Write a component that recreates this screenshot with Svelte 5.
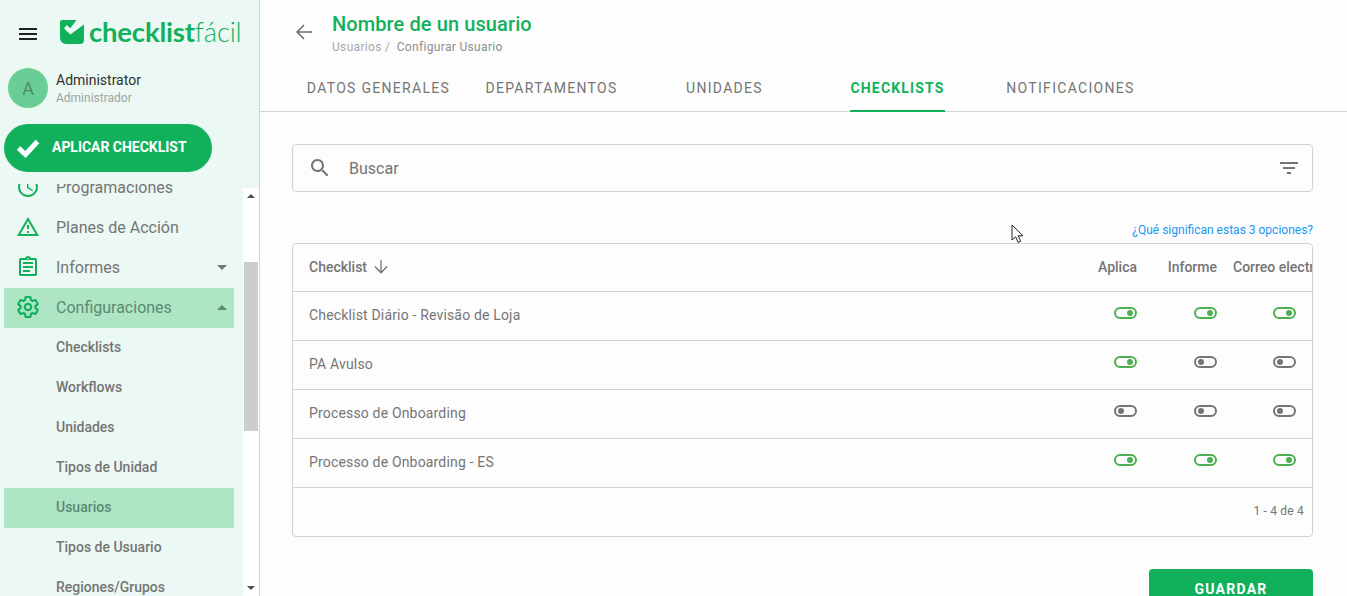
<script>
  const tabs = [
    { label: 'Datos generales' },
    { label: 'Departamentos' },
    { label: 'Unidades' },
    { label: 'Checklists', active: true },
    { label: 'Notificaciones' }
  ];
  const subItems = ['Checklists', 'Workflows', 'Unidades', 'Tipos de Unidad', 'Usuarios', 'Tipos de Usuario', 'Regiones/Grupos'];
  const rows = [
    { name: 'Checklist Diário - Revisão de Loja', values: [true, true, true] },
    { name: 'PA Avulso', values: [true, false, false] },
    { name: 'Processo de Onboarding', values: [false, false, false] },
    { name: 'Processo de Onboarding - ES', values: [true, true, true] }
  ];
</script>

<div class="page">
  <aside class="sidebar">
    <div class="brand">
      <svg class="menu" viewBox="0 0 24 24"><path d="M3 18h18v-2H3v2zm0-5h18v-2H3v2zm0-7v2h18V6H3z" /></svg>
      <svg class="logo-mark" viewBox="0 0 24 24">
        <path d="M2 0h14.5l-6.2 8.2-3.6-3.1-2.7 3.3 6.4 6.2L24 4.5V20a4 4 0 0 1-4 4H6a6 6 0 0 1-6-6V2a2 2 0 0 1 2-2z" fill="#11b15b" />
      </svg>
      <div class="logo-text"><b>checklist</b><span>fácil</span></div>
    </div>

    <div class="user">
      <div class="avatar">A</div>
      <div>
        <div class="user-name">Administrator</div>
        <div class="user-role">Administrador</div>
      </div>
    </div>

    <button class="apply">
      <svg viewBox="0 0 24 20"><path d="M2.5 10l7 6.5L21.5 3.5" fill="none" stroke="#fff" stroke-width="5" /></svg>
      <span>Aplicar checklist</span>
    </button>

    <div class="nav-wrap">
      <nav>
        <div class="nav-list">
          <div class="item">
            <svg class="ico" viewBox="0 0 24 24"><path d="M11.99 2C6.47 2 2 6.48 2 12s4.47 10 9.99 10C17.52 22 22 17.52 22 12S17.52 2 11.99 2zM12 20c-4.42 0-8-3.58-8-8s3.58-8 8-8 8 3.58 8 8-3.58 8-8 8zm.5-13H11v6l5.25 3.15.75-1.23-4.5-2.67z" /></svg>
            Programaciones
          </div>
          <div class="item">
            <svg class="ico" viewBox="0 0 24 24"><path d="M12 5.99L19.53 19H4.47L12 5.99M12 2L1 21h22L12 2zm1 14h-2v2h2v-2zm0-6h-2v4h2v-4z" /></svg>
            Planes de Acción
          </div>
          <div class="item">
            <svg class="ico" viewBox="0 0 24 24"><path d="M19 3h-4.18C14.4 1.84 13.3 1 12 1s-2.4.84-2.82 2H5c-1.1 0-2 .9-2 2v14c0 1.1.9 2 2 2h14c1.1 0 2-.9 2-2V5c0-1.1-.9-2-2-2zm-7-.25c.41 0 .75.34.75.75s-.34.75-.75.75-.75-.34-.75-.75.34-.75.75-.75zM19 19H5V5h14v14zM7 15h7v2H7zm0-4h10v2H7zm0-4h10v2H7z" /></svg>
            Informes
            <span class="caret down"></span>
          </div>
          <div class="item selected">
            <svg class="ico" viewBox="0 0 24 24">
              <path d="M19.43 12.98c.04-.32.07-.64.07-.98s-.03-.66-.07-.98l2.11-1.65c.19-.15.24-.42.12-.64l-2-3.46c-.12-.22-.39-.3-.61-.22l-2.49 1c-.52-.4-1.08-.73-1.69-.98l-.38-2.65C14.46 2.18 14.25 2 14 2h-4c-.25 0-.46.18-.49.42l-.38 2.65c-.61.25-1.17.59-1.69.98l-2.49-1c-.23-.09-.49 0-.61.22l-2 3.46c-.13.22-.07.49.12.64l2.11 1.65c-.04.32-.07.65-.07.98s.03.66.07.98l-2.11 1.65c-.19.15-.24.42-.12.64l2 3.46c.12.22.39.3.61.22l2.49-1c.52.4 1.08.73 1.69.98l.38 2.65c.03.24.24.42.49.42h4c.25 0 .46-.18.49-.42l.38-2.65c.61-.25 1.17-.59 1.69-.98l2.49 1c.23.09.49 0 .61-.22l2-3.46c.12-.22.07-.49-.12-.64l-2.11-1.65z" fill="none" stroke="#11b15b" stroke-width="2.2" />
              <circle cx="12" cy="12" r="3.2" fill="none" stroke="#11b15b" stroke-width="2.2" />
            </svg>
            Configuraciones
            <span class="caret up"></span>
          </div>
          {#each subItems as sub}
            <div class="item sub" class:selected={sub === 'Usuarios'}>{sub}</div>
          {/each}
        </div>
      </nav>
      <div class="scrollbar">
        <span class="arrow up"></span>
        <div class="track"><div class="thumb"></div></div>
        <span class="arrow down"></span>
      </div>
    </div>
  </aside>

  <main>
    <header>
      <svg class="back" viewBox="0 0 24 24"><path d="M20 11.2H6.9l5.6-5.6-1-1L4 12l7.5 7.4 1-1-5.6-5.6H20z" /></svg>
      <div>
        <h1>Nombre de un usuario</h1>
        <div class="crumbs"><span>Usuarios /</span> <em>Configurar Usuario</em></div>
      </div>
    </header>

    <div class="tabs">
      {#each tabs as tab}
        <div class="tab"><span class:active={tab.active}>{tab.label}</span></div>
      {/each}
    </div>

    <div class="content">
      <div class="search">
        <svg class="search-ico" viewBox="0 0 24 24"><path d="M15.5 14h-.79l-.28-.27C15.41 12.59 16 11.11 16 9.5 16 5.91 13.09 3 9.5 3S3 5.91 3 9.5 5.91 16 9.5 16c1.61 0 3.09-.59 4.23-1.57l.27.28v.79l5 4.99L20.49 19l-4.99-5zm-6 0C7.01 14 5 11.99 5 9.5S7.01 5 9.5 5 14 7.01 14 9.5 11.99 14 9.5 14z" /></svg>
        <span class="placeholder">Buscar</span>
        <svg class="filter-ico" viewBox="0 0 24 24"><path d="M10 18h4v-2h-4v2zM3 6v2h18V6H3zm3 7h12v-2H6v2z" /></svg>
      </div>

      <a class="help" href="#help">¿Qué significan estas 3 opciones?</a>

      <div class="table">
        <div class="row head">
          <div class="name">
            Checklist
            <svg viewBox="0 0 24 24"><path d="M20 12l-1.2-1.2-6 6V4h-1.6v12.8l-6-6L4 12l8 8z" /></svg>
          </div>
          <div class="col">Aplica</div>
          <div class="col">Informe</div>
          <div class="col last">Correo electrónico</div>
        </div>
        {#each rows as row}
          <div class="row">
            <div class="name">{row.name}</div>
            {#each row.values as on}
              <div class="col"><span class="toggle" class:on></span></div>
            {/each}
          </div>
        {/each}
        <div class="foot">1 - 4 de 4</div>
      </div>

      <div class="actions"><button class="save">Guardar</button></div>
    </div>

    <svg class="cursor" viewBox="0 0 13 20"><path d="M1 1v15l3.6-3.2 2.5 5.7 2.6-1.1-2.5-5.6H12z" fill="#fff" stroke="#222" stroke-width="1" /></svg>
  </main>
</div>

<style>
  :global(body) {
    margin: 0;
    overflow: hidden;
  }

  .page {
    display: flex;
    height: 596px;
    overflow: hidden;
    font-family: Roboto, "Liberation Sans", sans-serif;
    color: #757575;
  }

  .sidebar {
    display: flex;
    flex-direction: column;
    flex: none;
    box-sizing: border-box;
    width: 260px;
    background: #ecf8f3;
    border-right: 1px solid #d4d4d4;
  }

  .brand {
    display: flex;
    align-items: center;
    height: 68px;
    padding-left: 16px;
    box-sizing: border-box;
    padding-bottom: 1px;
  }

  .menu {
    width: 24px;
    height: 24px;
    fill: #212121;
    margin-right: 20px;
    margin-top: 1px;
  }

  .logo-mark {
    width: 24px;
    height: 24px;
    margin-right: 5px;
    margin-bottom: 4px;
  }

  .logo-text {
    font-family: Lato, "Open Sans", sans-serif;
    font-size: 27.5px;
    line-height: 28px;
    color: #11b15b;
    letter-spacing: -0.2px;
    margin-bottom: 4px;
    white-space: nowrap;
  }

  .logo-text b {
    font-weight: 700;
  }

  .logo-text span {
    font-weight: 300;
  }

  .user {
    display: flex;
    align-items: center;
    gap: 8px;
    padding-left: 8px;
    height: 40px;
  }

  .avatar {
    display: flex;
    align-items: center;
    justify-content: center;
    width: 40px;
    height: 40px;
    border-radius: 50%;
    background: #69cd95;
    color: #4d8c69;
    font-size: 18px;
  }

  .user-name {
    font-size: 14px;
    line-height: 18px;
    color: #303030;
    margin-top: 1px;
  }

  .user-role {
    font-size: 12px;
    line-height: 18px;
    color: #a3a3a3;
  }

  .apply {
    display: flex;
    align-items: center;
    gap: 12px;
    flex: none;
    width: 208px;
    height: 48px;
    margin: 16px 0 0 4px;
    padding: 0 0 0 12px;
    border: 0;
    border-radius: 24px;
    background: #11b15b;
    color: #fff;
    font-family: inherit;
    font-size: 14px;
    font-weight: 700;
    text-transform: uppercase;
    letter-spacing: -0.03px;
  }

  .apply span {
    margin-bottom: 2px;
  }

  .apply svg {
    width: 24px;
    height: 20px;
  }

  .nav-wrap {
    display: flex;
    flex: 1;
    min-height: 0;
  }

  nav {
    flex: 1;
    margin-top: 12px;
    overflow: hidden;
  }

  .nav-list {
    margin-top: -16px;
  }

  .item {
    display: flex;
    align-items: center;
    width: 230px;
    height: 40px;
    margin-left: 4px;
    border-radius: 2px;
    font-size: 16px;
    box-sizing: border-box;
    padding: 0 7px 2px 0;
    color: #757575;
  }

  .ico {
    width: 24px;
    height: 24px;
    margin: 0 16px 0 12px;
    fill: #11b15b;
  }

  .item.sub {
    padding-left: 52px;
    font-size: 14px;
    font-weight: 500;
  }

  .item.selected {
    background: #aee5c5;
    color: #5b8a70;
  }

  .caret {
    margin-left: auto;
    border-left: 5px solid transparent;
    border-right: 5px solid transparent;
  }

  .caret.down {
    border-top: 5px solid #757575;
  }

  .caret.up {
    border-bottom: 5px solid #5b8a70;
  }

  .scrollbar {
    display: flex;
    flex-direction: column;
    flex: none;
    width: 16px;
    margin-top: 16px;
    background: #fff;
  }

  .arrow {
    flex: none;
    align-self: center;
    margin: 6px 0;
    border-left: 4px solid transparent;
    border-right: 4px solid transparent;
  }

  .arrow.up {
    border-bottom: 4px solid #505050;
  }

  .arrow.down {
    border-top: 4px solid #505050;
  }

  .track {
    flex: 1;
  }

  .thumb {
    height: 169px;
    margin: 58px 1px 0 1px;
    background: #cdcdcd;
  }

  main {
    flex: 1;
    min-width: 0;
    position: relative;
    background: #fdfdfd;
  }

  header {
    display: flex;
    align-items: flex-start;
    height: 64px;
    box-sizing: border-box;
    padding: 13px 0 0 32px;
  }

  .back {
    width: 24px;
    height: 24px;
    margin: 7px 16px 0 0;
    fill: #6b6b6b;
  }

  h1 {
    margin: 0;
    font-size: 20px;
    line-height: 23px;
    font-weight: 500;
    letter-spacing: 0.1px;
    color: #11b15b;
  }

  .crumbs {
    font-size: 12px;
    line-height: 16px;
    margin-top: 3px;
    letter-spacing: 0.33px;
    color: #a8a8a8;
  }

  .crumbs em {
    font-style: normal;
    color: #8f8f8f;
    margin-left: 3px;
  }

  .tabs {
    display: grid;
    grid-template-columns: repeat(5, 173px);
    height: 47px;
    padding-left: 32px;
    border-bottom: 1px solid #d4d4d4;
  }

  .tab {
    display: flex;
    justify-content: center;
  }

  .tab span {
    display: flex;
    align-items: center;
    height: 47px;
    padding: 0 1px;
    font-size: 14px;
    letter-spacing: 1.3px;
    text-transform: uppercase;
    color: #757575;
    box-sizing: border-box;
  }

  .tab span.active {
    color: #11b15b;
    font-weight: 700;
    letter-spacing: 1.15px;
    border-bottom: 2px solid #11b15b;
    height: 48px;
    padding-top: 1px;
  }

  .content {
    display: flex;
    flex-direction: column;
    padding: 32px 34px 0 32px;
  }

  .search {
    display: flex;
    align-items: center;
    height: 48px;
    box-sizing: border-box;
    border: 1px solid #d2d2d2;
    border-radius: 4px;
    padding: 0 11px 0 15px;
  }

  .search-ico {
    width: 24px;
    height: 24px;
    fill: #757575;
    margin-right: 17px;
  }

  .placeholder {
    flex: 1;
    font-size: 16px;
    color: #757575;
  }

  .filter-ico {
    width: 24px;
    height: 24px;
    fill: #757575;
  }

  .help {
    align-self: flex-end;
    margin: 30px 0 5px;
    font-size: 12px;
    line-height: 16px;
    color: #2196f3;
    text-decoration: none;
  }

  .table {
    border: 1px solid #d2d2d2;
    border-radius: 4px;
    overflow: hidden;
  }

  .row {
    display: grid;
    grid-template-columns: 1fr 80px 80px 79px;
    height: 49px;
    box-sizing: border-box;
    border-bottom: 1px solid #d2d2d2;
    font-size: 14px;
  }

  .row.head {
    height: 48px;
    font-weight: 500;
  }

  .name {
    display: flex;
    align-items: center;
    padding: 0 0 2px 16px;
    letter-spacing: 0.17px;
  }

  .head .name {
    letter-spacing: 0;
  }

  .head .name svg {
    width: 20px;
    height: 20px;
    margin-left: 4px;
    fill: #757575;
  }

  .col {
    display: flex;
    align-items: center;
    justify-content: flex-end;
    padding: 0 16px 2px 0;
    white-space: nowrap;
    min-width: 0;
  }

  .col.last {
    justify-content: flex-start;
    padding: 0 0 2px 0;
  }

  .row:not(.head) .col {
    padding-bottom: 6px;
  }

  .row:not(.head) .col.last {
    padding: 0;
  }

  .toggle {
    display: flex;
    align-items: center;
    justify-content: flex-start;
    box-sizing: border-box;
    width: 23px;
    height: 12px;
    padding: 0 2px;
    border: 2px solid #757575;
    border-radius: 6px;
  }

  .toggle::after {
    content: '';
    width: 6px;
    height: 6px;
    border-radius: 50%;
    background: #757575;
  }

  .toggle.on {
    justify-content: flex-end;
    border-color: #4caf50;
  }

  .toggle.on::after {
    background: #4caf50;
  }

  .foot {
    display: flex;
    align-items: center;
    justify-content: flex-end;
    height: 48px;
    box-sizing: border-box;
    padding: 0 8px 3px 0;
    font-size: 12px;
    letter-spacing: 0.2px;
  }

  .actions {
    display: flex;
    justify-content: flex-end;
    margin-top: 32px;
  }

  .save {
    width: 164px;
    height: 40px;
    border: 0;
    border-radius: 4px;
    background: #11b15b;
    color: #fff;
    font-family: inherit;
    font-size: 14px;
    font-weight: 700;
    letter-spacing: 1.25px;
    text-transform: uppercase;
  }

  .cursor {
    position: absolute;
    left: 751px;
    top: 224px;
    width: 13px;
    height: 20px;
  }
</style>
